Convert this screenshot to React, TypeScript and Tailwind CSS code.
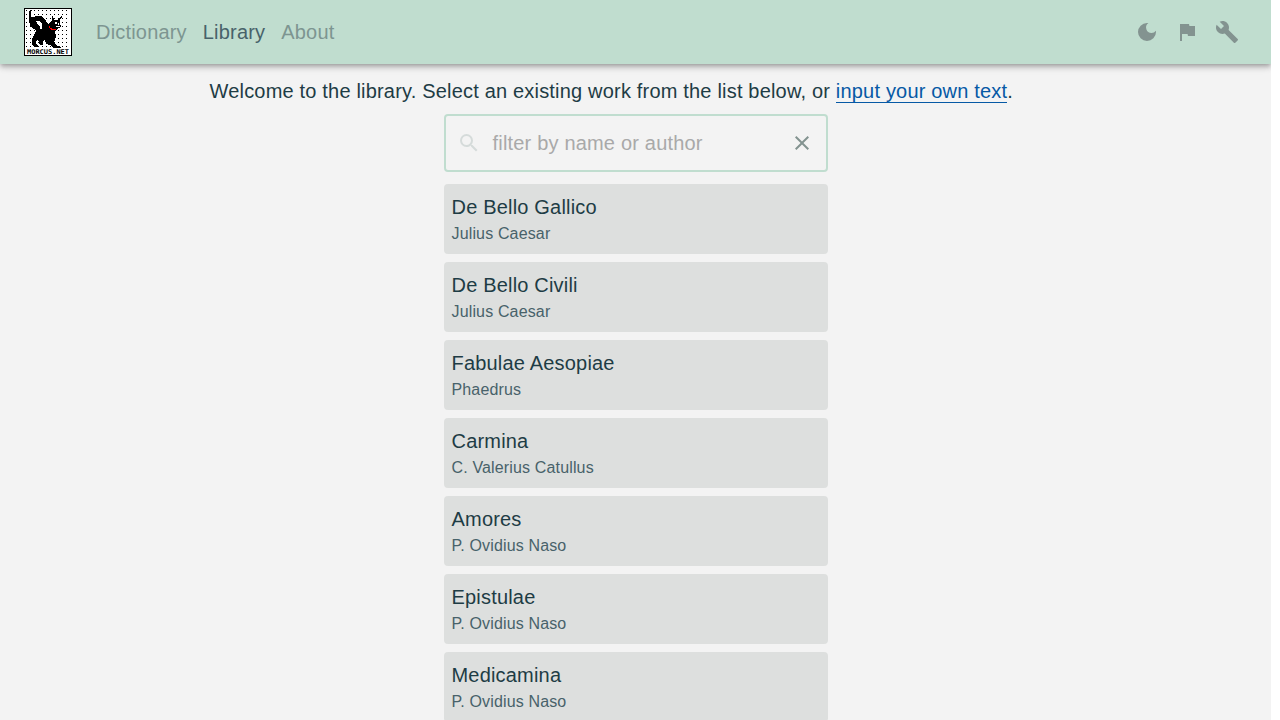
import { MdBuild, MdClose, MdDarkMode, MdFlag, MdSearch } from "react-icons/md";

const WORKS = [
  ["De Bello Gallico", "Julius Caesar"],
  ["De Bello Civili", "Julius Caesar"],
  ["Fabulae Aesopiae", "Phaedrus"],
  ["Carmina", "C. Valerius Catullus"],
  ["Amores", "P. Ovidius Naso"],
  ["Epistulae", "P. Ovidius Naso"],
  ["Medicamina", "P. Ovidius Naso"],
];

function Logo() {
  return (
    <svg width="48" height="48" viewBox="0 0 48 48" className="shrink-0" shapeRendering="crispEdges">
      <defs>
        <pattern id="dots" x="2" y="2" width="4" height="4" patternUnits="userSpaceOnUse">
          <rect x="0" y="0" width="1" height="1" fill="#000" />
        </pattern>
      </defs>
      <rect width="48" height="48" fill="#000" />
      <rect x="1" y="1" width="46" height="46" fill="#fff" />
      <rect x="2" y="2" width="44" height="38" fill="url(#dots)" />
      <path
        d="M6 2H8V3H7V9H9L12 8H17L20 10L22 13L24 16L26 14L28 13V8H29L30 12H34L36 9L38 7V9L36 12V16L37 18L35 20L32 22L31 23L32 29L31 32L30 34L32 37L37 39V40H29L26 37L22 36L21 32L19 33V37H16L14 31L13 32L12 35L14 38V39H10L8 37V31L11 26L12 22L8 20L6 17L5 12V5Z"
        fill="#000"
      />
      <path d="M12 13H15L18 16V21L16 21V18L14 17Z" fill="#fff" />
      <path d="M31 14H33V16H31ZM34 15H35V17H34ZM32 18H36V19H32Z" fill="#fff" />
      <path d="M25 18H26V20H28V21H32V22H27V21H26V20H25Z" fill="#f00" />
      <rect x="2" y="40" width="44" height="7" fill="#fff" />
      <text x="3" y="45.5" textLength="42" lengthAdjust="spacingAndGlyphs" fontFamily="DejaVu Sans Mono, monospace" fontSize="6.5" fontWeight="700" fill="#000">
        MORCUS.NET
      </text>
    </svg>
  );
}

export default function App() {
  return (
    <div className="h-screen overflow-hidden bg-white font-['Liberation_Sans',sans-serif]">
      <div className="h-full w-[1271px] overflow-hidden bg-[#f3f3f3]">
        <header className="relative flex h-16 items-center justify-between bg-[#c0ddcf] pl-6 pr-8 shadow-[0px_2px_4px_-1px_rgba(0,0,0,0.2),0px_4px_5px_0px_rgba(0,0,0,0.14),0px_1px_10px_0px_rgba(0,0,0,0.12)]">
          <div className="flex items-center">
            <Logo />
            <nav className="ml-6 flex gap-4 text-xl tracking-[0.1876px] text-[#7d9591]">
              <a>Dictionary</a>
              <a className="text-[#48626a]">Library</a>
              <a>About</a>
            </nav>
          </div>
          <div className="flex gap-4 text-2xl text-[#839390]">
            <MdDarkMode />
            <MdFlag />
            <MdBuild />
          </div>
        </header>
        <main className="mx-auto w-[852px] pt-3 text-[#1e3c45]">
          <p className="text-xl leading-[30px] tracking-[0.1876px]">
            Welcome to the library. Select an existing work from the list below, or{" "}
            <a className="border-b border-[#0659a5] text-[#0659a5]">input your own text</a>.
          </p>
          <div className="mx-auto mt-2 w-96">
            <div className="flex h-[58px] items-center rounded border-2 border-[#c0ddcf] pl-[11px] pr-3">
              <MdSearch className="text-2xl text-[#d5dbda]" />
              <span className="ml-3 flex-1 text-xl tracking-[0.1876px] text-[#a9a9a9]">filter by name or author</span>
              <MdClose className="text-2xl text-[#839390]" />
            </div>
            <ul className="mt-3 flex flex-col gap-2">
              {WORKS.map(([title, author]) => (
                <li key={title} className="h-[70px] rounded bg-[#dddfde] px-2 pt-2">
                  <div className="text-xl leading-[30px] tracking-[0.1876px]">{title}</div>
                  <div className="text-base leading-6 tracking-[0.15px] text-[#48626a]">{author}</div>
                </li>
              ))}
            </ul>
          </div>
        </main>
      </div>
    </div>
  );
}
